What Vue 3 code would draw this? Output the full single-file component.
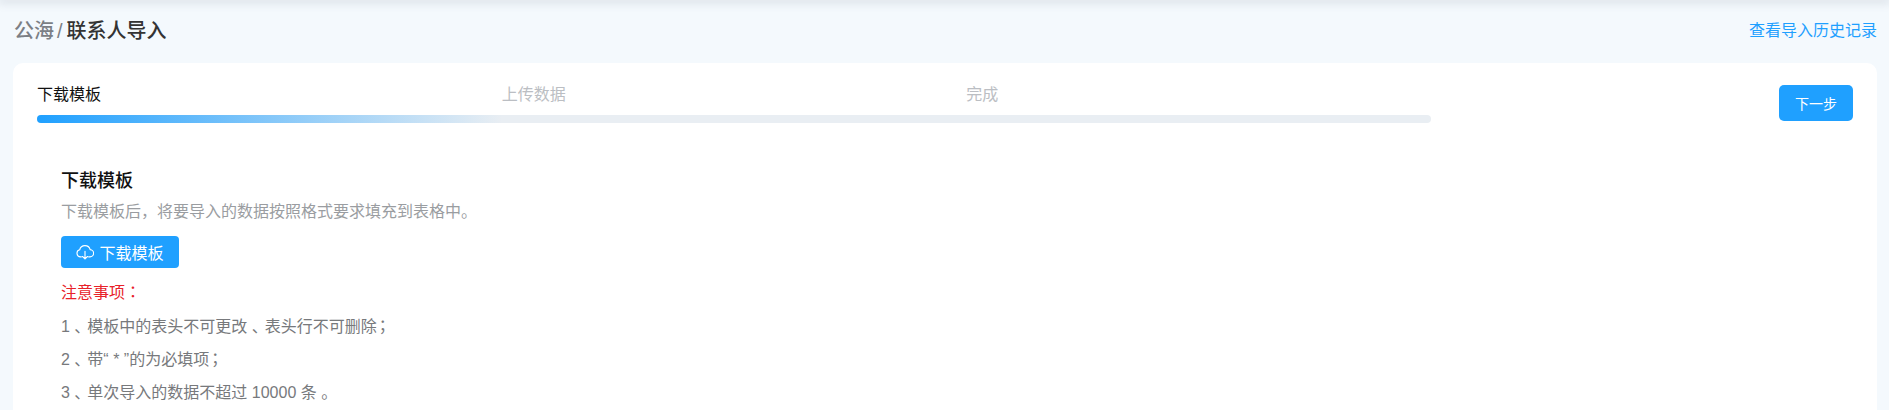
<script setup>
const steps = ['下载模板', '上传数据', '完成']
const notes = [
  { parts: ['1 ', '模板中的表头不可更改 ', '表头行不可删除'], end: '；' },
  { parts: ['2 ', '带“ * ”的为必填项'], end: '；' },
  { parts: ['3 ', '单次导入的数据不超过 10000 条 。'], end: '' },
]
</script>

<template>
  <div class="page">
    <div class="topbar"></div>
    <div class="head">
      <div class="crumb">
        <span class="crumb-light">公海</span><span class="crumb-light slash">/</span><span class="crumb-now">联系人导入</span>
      </div>
      <a class="history">查看导入历史记录</a>
    </div>

    <div class="card">
      <div class="step-row">
        <div class="steps">
          <div class="step-labels">
            <span v-for="(s, i) in steps" :key="s" class="step-label" :class="{ active: i === 0 }">{{ s }}</span>
          </div>
          <div class="bar"><div class="bar-fill"></div></div>
        </div>
        <button class="next-btn">下一步</button>
      </div>

      <div class="body">
        <div class="title">下载模板</div>
        <div class="desc">下载模板后，将要导入的数据按照格式要求填充到表格中。</div>
        <button class="down-btn">
          <svg width="18" height="18" viewBox="0 0 16 16" fill="none" stroke="#fff" stroke-width="1" stroke-linecap="round" stroke-linejoin="round">
            <path d="M4.8 12.3H4A3.2 3.2 0 0 1 3.3 6 4.8 4.8 0 0 1 12.6 5.9a3.2 3.2 0 0 1 -.3 6.4h-1.1" />
            <path d="M8 7.4v6.8M5.8 12 8 14.2 10.2 12" />
          </svg>
          <span>下载模板</span>
        </button>
        <div class="notice">注意事项<span class="punct">：</span></div>
        <div v-for="(n, k) in notes" :key="k" class="note">
          <template v-for="(p, i) in n.parts" :key="i"><span v-if="i" class="dun">、</span>{{ p }}</template><span class="punct end">{{ n.end }}</span>
        </div>
      </div>
    </div>
  </div>
</template>

<style>
html, body {
  margin: 0;
  background: #f4f9fd;
}
</style>

<style scoped>
.page {
  height: 410px;
  overflow: hidden;
  background: #f4f9fd;
  font-family: "Liberation Sans", "Noto Sans CJK SC", sans-serif;
}
.topbar {
  height: 0;
  box-shadow: 0 0 10px 2px rgba(90, 100, 120, 0.28);
}
.head {
  display: flex;
  justify-content: space-between;
  align-items: center;
  height: 63px;
  padding: 0 12px 0 14px;
}
.crumb {
  font-size: 20px;
  line-height: 28px;
  font-weight: 500;
  margin-top: -2px;
}
.crumb-light {
  color: #7b7f85;
}
.slash {
  margin: 0 4px 0 3px;
}
.crumb-now {
  color: #333;
}
.history {
  font-size: 16px;
  color: #1fa0ff;
  margin-top: -6px;
}
.card {
  margin: 0 12px 0 13px;
  background: #fff;
  border-radius: 10px;
  height: 360px;
  padding: 22px 24px 0;
}
.step-row {
  display: flex;
  justify-content: space-between;
  align-items: flex-start;
}
.steps {
  width: 1394px;
}
.step-labels {
  display: grid;
  grid-template-columns: repeat(3, 1fr);
  height: 30px;
}
.step-label {
  font-size: 16px;
  line-height: 20px;
  color: #bbbec3;
}
.step-label.active {
  color: #111;
}
.bar {
  height: 8px;
  border-radius: 4px;
  background: #e9eef3;
  overflow: hidden;
}
.bar-fill {
  width: 465px;
  height: 8px;
  background: linear-gradient(90deg, #1fa0ff 0%, #e9eef3 100%);
}
.next-btn {
  width: 74px;
  height: 36px;
  border: 0;
  border-radius: 5px;
  background: #1fa0ff;
  color: #fff;
  font-family: inherit;
  font-size: 14px;
}
.body {
  padding: 45px 0 0 24px;
}
.title {
  font-size: 18px;
  line-height: 26px;
  font-weight: 500;
  color: #111;
}
.desc {
  font-size: 16px;
  line-height: 22px;
  margin-top: 7px;
  color: #9a9da1;
}
.down-btn {
  display: flex;
  align-items: center;
  justify-content: center;
  gap: 5px;
  width: 118px;
  height: 32px;
  margin: 13px 0 0;
  padding: 0 0 1px;
  border: 0;
  border-radius: 4px;
  background: #1fa0ff;
  color: #fff;
  font-family: inherit;
  font-size: 16px;
}
.notice {
  font-size: 16px;
  line-height: 22px;
  margin-top: 14px;
  color: #e8222a;
}
.note {
  font-size: 16px;
  line-height: 22px;
  margin-top: 11px;
  color: #77797c;
}
.notice + .note {
  margin-top: 12px;
}
.dun {
  margin-right: -3px;
}
/* 冒号分号居中 */
.punct {
  font-family: "Noto Sans CJK TC", sans-serif;
  line-height: 0;
}
.end {
  margin-left: -2px;
}
</style>
